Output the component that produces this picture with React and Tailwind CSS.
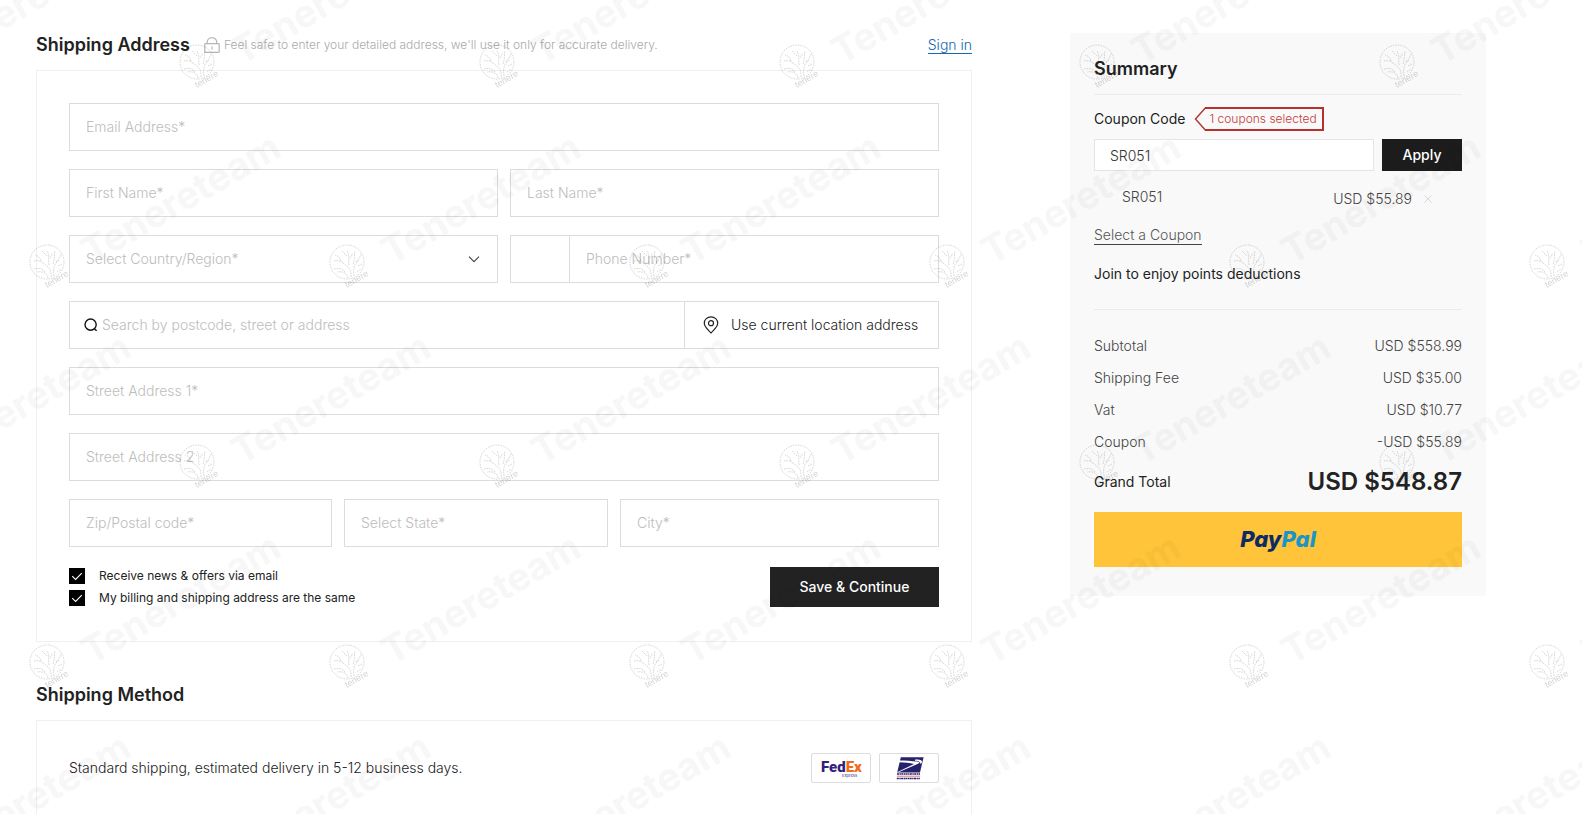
import React from "react";

const FIELD =
  "block h-12 w-full min-w-0 appearance-none rounded-none border border-[#dcdcdc] bg-white px-4 pb-0.5 text-sm font-light text-[#222] outline-none placeholder:text-[#bdbdbd] placeholder:opacity-100";

function Field({ id, label, type = "text" }) {
  return <input id={id} type={type} placeholder={label} aria-label={label} className={FIELD} />;
}

function LockIcon() {
  return (
    <svg className="h-4 w-4 shrink-0" viewBox="0 0 16 16" fill="none" stroke="#b5b5b5" aria-hidden="true">
      <rect x="0.8" y="6.6" width="14.4" height="8.8" rx="0.6" strokeWidth="1.2" />
      <path d="M3.2 6.4V5.2a4.8 4.6 0 0 1 9.6 0v1.2" strokeWidth="1.2" />
      <path d="M8 9.6v2.8" strokeWidth="1.2" />
    </svg>
  );
}

function SearchIcon() {
  return (
    <svg className="h-3.5 w-3.5 shrink-0" viewBox="0 0 14 14" fill="none" stroke="#111" strokeWidth="1.4" aria-hidden="true">
      <circle cx="6.6" cy="6.6" r="5.6" />
      <path d="M10.2 10.4l2.4 2.4" />
    </svg>
  );
}

function PinIcon() {
  return (
    <svg className="h-[18px] w-4 shrink-0" viewBox="0 0 16 18" fill="none" stroke="#222" strokeWidth="1.2" aria-hidden="true">
      <path d="M8 17C6.6 14.9 1.3 11.4 1.3 7.2a6.7 6.4 0 0 1 13.4 0C14.7 11.4 9.4 14.9 8 17z" />
      <circle cx="8" cy="7.2" r="2.5" />
    </svg>
  );
}

function CheckRow({ id, label }) {
  return (
    <div className="flex h-4 items-center">
      <span className="relative h-4 w-4 shrink-0">
        <input
          id={id}
          type="checkbox"
          defaultChecked
          className="peer block h-4 w-4 appearance-none border border-black bg-white checked:bg-black"
        />
        <svg
          className="pointer-events-none absolute inset-0 hidden h-4 w-4 peer-checked:block"
          viewBox="0 0 16 16"
          fill="none"
          stroke="#fff"
          strokeWidth="1.1"
          aria-hidden="true"
        >
          <path d="M3.2 8.2l3.4 3.2 6.2-6.2" />
        </svg>
      </span>
      <label htmlFor={id} className="ml-3.5 text-xs leading-[18px] text-[#222]">{label}</label>
    </div>
  );
}

function CouponTag() {
  return (
    <span className="relative ml-[9px] inline-flex h-6 w-[130px] items-center pl-[15px] text-xs font-light text-[#c83a3a]">
      <svg className="absolute inset-0 h-6 w-[130px]" viewBox="0 0 130 24" fill="none" stroke="#b72f2f" aria-hidden="true">
        <path d="M11 1H129V23H11" strokeWidth="2" />
        <path d="M11.5 0.8L1.5 12L11.5 23.2" strokeWidth="1.4" />
      </svg>
      <span className="whitespace-nowrap">1 coupons selected</span>
    </span>
  );
}

function FedExLogo() {
  return (
    <svg className="h-7 w-14" viewBox="0 0 56 28" role="img" aria-label="FedEx Express">
      <text x="8" y="18" fontFamily="Roboto, 'Liberation Sans', sans-serif" fontWeight="900" fontSize="15">
        <tspan fill="#34207f">Fed</tspan>
        <tspan fill="#f26b1d">Ex</tspan>
      </text>
      <text x="29" y="23" fill="#34207f" fontFamily="Inter, sans-serif" fontSize="4">Express</text>
    </svg>
  );
}

function UspsLogo() {
  return (
    <svg className="h-7 w-14" viewBox="0 0 56 28" role="img" aria-label="United States Postal Service">
      <path d="M19.8 3.2H42.6L39 18.4H16.2z" fill="#26216b" />
      <path d="M18.4 6.4C24 6.4 31 6.8 36 7.6c2.6.4 3 1.2 1 2.1L17 18.4l-.4-.4L33 9.9c-4-1-9-1.4-15.2-1.6z" fill="#fff" />
      <path d="M34 5.6c4.6 0 7.2.6 6.9 2.4l-.5 1.6h-1.6c.6-1.8-.8-2.4-4.8-2.8z" fill="#fff" />
      <path d="M16 20h23M15.8 24.6h23" stroke="#26216b" strokeWidth="1.5" strokeDasharray="2 .5 1.4 .4" />
      <path d="M15.8 22.2h23.4" stroke="#d43c3c" strokeWidth="0.7" />
    </svg>
  );
}

function Stamp() {
  return (
    <g>
      <g fill="none" stroke="#000" strokeOpacity="0.19" strokeWidth="0.8">
        <circle cx="27" cy="262" r="17" strokeDasharray="1.6 1" />
        <g strokeDasharray="1.8 0.9">
          <path d="M31 277c1-8-3-10-8-14M34 276c-1-8 0-12 5-16M28 278c-1-5-5-7-11-6" />
          <path d="M29 265c-1-6 1-9-2-14M33 264c2-5 1-9 2-13M23 263c-3-2-5-3-9-2M21 261c-1-4-3-5-6-6M36 262c2-3 4-4 5-8M27 256l-5-5M30 258l3-5M38 266l4-2" />
          <path d="M25 272c-3-4-6-4-11-3M37 272l4-3" />
        </g>
      </g>
      <text
        transform="translate(27 288) rotate(-30)"
        fill="#000"
        fillOpacity="0.18"
        fontFamily="'Liberation Sans', sans-serif"
        fontSize="9"
      >
        tenere
      </text>
      <text
        transform="translate(161 199) rotate(-30)"
        y="13"
        textAnchor="middle"
        fill="#000"
        fillOpacity="0.03"
        fontFamily="Inter, sans-serif"
        fontWeight="700"
        fontSize="38"
      >
        Tenereteam
      </text>
    </g>
  );
}

function Watermark() {
  return (
    <svg className="pointer-events-none absolute inset-0 h-full w-full" aria-hidden="true">
      <defs>
        <pattern id="stamp-a" x="20" y="0" width="300" height="400" patternUnits="userSpaceOnUse">
          <Stamp />
        </pattern>
        <pattern id="stamp-b" x="170" y="200" width="300" height="400" patternUnits="userSpaceOnUse">
          <Stamp />
        </pattern>
      </defs>
      <rect width="100%" height="100%" fill="url(#stamp-a)" />
      <rect width="100%" height="100%" fill="url(#stamp-b)" />
    </svg>
  );
}

function ShippingForm() {
  return (
    <form
      className="flex flex-col gap-[18px] border border-[#f0f0f0] px-8 pt-8 pb-[34px]"
      onSubmit={(e) => e.preventDefault()}
    >
      <Field id="email" label="Email Address*" type="email" />
      <div className="grid grid-cols-2 gap-3">
        <Field id="first" label="First Name*" />
        <Field id="last" label="Last Name*" />
      </div>
      <div className="grid grid-cols-2 gap-3">
        <div className="relative">
          <select
            id="country"
            aria-label="Country or region"
            defaultValue=""
            className="h-12 w-full appearance-none rounded-none border border-[#dcdcdc] bg-white px-4 text-sm font-light text-[#bdbdbd] outline-none"
          >
            <option value="">Select Country/Region*</option>
          </select>
          <svg
            className="pointer-events-none absolute top-[18px] right-[18px] h-3 w-3"
            viewBox="0 0 12 12"
            fill="none"
            stroke="#444"
            strokeWidth="1.1"
            aria-hidden="true"
          >
            <path d="M1 3.6l5 5 5-5" />
          </svg>
        </div>
        <div className="flex">
          <input
            id="dial"
            type="text"
            aria-label="Country code"
            className="h-12 w-[59px] shrink-0 rounded-none border border-r-0 border-[#dcdcdc] bg-white text-center text-sm font-light outline-none"
          />
          <div className="min-w-0 flex-1">
            <Field id="phone" label="Phone Number*" type="tel" />
          </div>
        </div>
      </div>
      <div className="flex h-12 border border-[#dcdcdc]">
        <label htmlFor="lookup" className="flex items-center pl-3.5">
          <SearchIcon />
        </label>
        <input
          id="lookup"
          type="text"
          aria-label="Search by postcode, street or address"
          placeholder="Search by postcode, street or address"
          className="min-w-0 flex-1 bg-transparent px-1 text-sm font-light text-[#222] outline-none placeholder:text-[#bdbdbd] placeholder:opacity-100"
        />
        <button
          type="button"
          className="flex w-[254px] shrink-0 items-center gap-3 border-l border-[#dcdcdc] pl-[18px] text-sm font-light whitespace-nowrap text-[#222]"
        >
          <PinIcon />
          Use current location address
        </button>
      </div>
      <Field id="street1" label="Street Address 1*" />
      <Field id="street2" label="Street Address 2" />
      <div className="grid grid-cols-[263fr_264fr_319fr] gap-3">
        <Field id="zip" label="Zip/Postal code*" />
        <select
          id="state"
          aria-label="State"
          defaultValue=""
          className="h-12 w-full min-w-0 appearance-none rounded-none border border-[#dcdcdc] bg-white px-4 text-sm font-light text-[#bdbdbd] outline-none"
        >
          <option value="">Select State*</option>
        </select>
        <Field id="city" label="City*" />
      </div>
      <div className="flex items-center justify-between pt-0.5">
        <div className="flex flex-col gap-1.5">
          <CheckRow id="news" label="Receive news & offers via email" />
          <CheckRow id="same" label="My billing and shipping address are the same" />
        </div>
        <button type="submit" className="h-10 w-[169px] bg-[#222] text-sm font-medium text-white">
          Save &amp; Continue
        </button>
      </div>
    </form>
  );
}

const TOTALS = [
  ["Subtotal", "USD $558.99"],
  ["Shipping Fee", "USD $35.00"],
  ["Vat", "USD $10.77"],
  ["Coupon", "-USD $55.89"],
];

function Summary() {
  return (
    <aside className="w-[416px] shrink-0 self-start bg-[#f9f9f9] px-6 pt-[22px] pb-[29px]">
      <h2 className="text-lg leading-7 font-semibold text-[#222]">Summary</h2>
      <div className="mt-[11px] flex items-center border-t border-[#ebebeb] pt-3">
        <label htmlFor="coupon" className="text-sm text-[#222]">Coupon Code</label>
        <CouponTag />
      </div>
      <div className="mt-2 flex gap-2">
        <input
          id="coupon"
          type="text"
          defaultValue="SR051"
          className="h-8 min-w-0 flex-1 rounded-none border border-[#e5e5e5] bg-white px-[15px] text-sm font-light text-[#333] outline-none"
        />
        <button type="button" className="h-8 w-20 bg-[#1c1c1c] text-sm font-medium text-white">
          Apply
        </button>
      </div>
      <div className="mt-4 flex items-start pr-[30px] pl-7 text-sm leading-5 font-light text-[#444]">
        <span className="flex-1">SR051</span>
        <div className="flex items-center pt-0.5">
          <span>USD $55.89</span>
          <button type="button" aria-label="Remove coupon" className="ml-3 flex h-5 w-2 items-center">
            <svg className="h-2 w-2" viewBox="0 0 8 8" stroke="#d8d8d8" strokeWidth="1" aria-hidden="true">
              <path d="M0.5 0.5l7 7M7.5 0.5l-7 7" />
            </svg>
          </button>
        </div>
      </div>
      <div className="mt-[17px] flex">
        <a href="#coupons" className="border-b border-[#444] text-sm leading-[18px] font-light text-[#555]">
          Select a Coupon
        </a>
      </div>
      <p className="mt-[19px] text-sm leading-5 text-[#222]">Join to enjoy points deductions</p>
      <dl className="mt-[25px] border-t border-[#ebebeb] pt-5 text-sm font-light text-[#444]">
        {TOTALS.map(([name, value]) => (
          <div key={name} className="flex h-8 items-center justify-between">
            <dt>{name}</dt>
            <dd>{value}</dd>
          </div>
        ))}
        <div className="mt-2 flex h-8 items-center justify-between text-[#222]">
          <dt className="font-normal">Grand Total</dt>
          <dd className="text-2xl font-semibold">USD $548.87</dd>
        </div>
      </dl>
      <button
        type="button"
        aria-label="PayPal"
        className="mt-[14px] flex h-[55px] w-full items-center justify-center bg-[#ffc439] text-[22px] font-extrabold text-[#0b2a66] italic"
      >
        Pay<span className="text-[#1b95c9]">Pal</span>
      </button>
    </aside>
  );
}

export default function App() {
  return (
    <div className="relative min-h-screen overflow-hidden bg-white font-[Inter,'Liberation_Sans',sans-serif] text-[#222]">
      <div className="flex gap-[98px] pr-24 pl-9">
        <main className="min-w-0 flex-1 pt-[31px]">
          <header className="mb-[11px] flex h-7 items-center">
            <h2 className="text-lg font-semibold">Shipping Address</h2>
            <p className="ml-3.5 flex flex-1 items-center gap-1 text-xs font-light text-[#aaa]">
              <LockIcon />
              Feel safe to enter your detailed address, we'll use it only for accurate delivery.
            </p>
            <a href="#signin" className="border-b border-[#1668b0] text-sm leading-[17px] font-light text-[#1668b0]">
              Sign in
            </a>
          </header>
          <ShippingForm />
          <section>
            <h2 className="mt-[39px] mb-[11px] text-lg leading-7 font-semibold">Shipping Method</h2>
            <div className="flex h-[128px] items-start justify-between border border-[#f0f0f0] p-8">
              <p className="text-sm leading-[30px] font-light">
                Standard shipping, estimated delivery in 5-12 business days.
              </p>
              <div className="flex gap-2">
                <span className="flex h-[30px] w-[60px] items-center justify-center rounded-xs border border-[#dcdcdc] bg-white">
                  <FedExLogo />
                </span>
                <span className="flex h-[30px] w-[60px] items-center justify-center rounded-xs border border-[#dcdcdc] bg-white">
                  <UspsLogo />
                </span>
              </div>
            </div>
          </section>
        </main>
        <div className="pt-[33px]">
          <Summary />
        </div>
      </div>
      <Watermark />
    </div>
  );
}
